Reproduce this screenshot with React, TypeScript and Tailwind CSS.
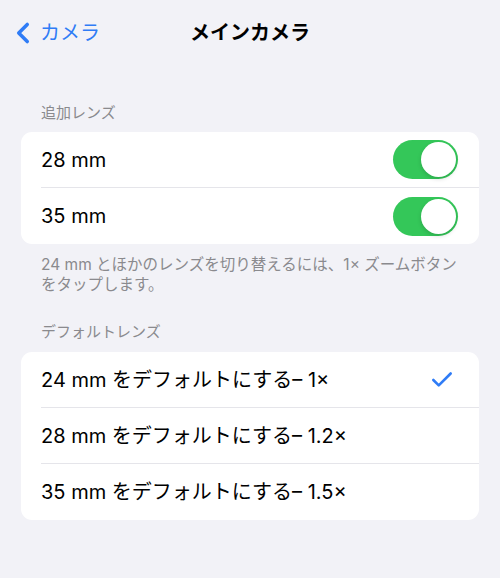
import { Check, ChevronLeft } from "lucide-react";

const font = { fontFamily: '"Inter", "Noto Sans CJK JP", sans-serif' };

function Toggle() {
  return (
    <div className="flex h-[39px] w-[65px] items-center justify-end rounded-full bg-[#34c759] p-[2px]">
      <div className="h-[35px] w-[35px] rounded-full bg-white shadow-[0_2px_4px_rgba(0,0,0,0.15)]" />
    </div>
  );
}

function Row({ label, right, last }: { label: string; right?: React.ReactNode; last?: boolean }) {
  return (
    <div className="flex h-[56px] items-center pl-5">
      <div
        className={`flex h-full flex-1 items-center justify-between pr-[21px] ${
          last ? "" : "border-b border-[#e5e5ea]"
        }`}
      >
        <span className="text-[20px] text-black">{label}</span>
        {right}
      </div>
    </div>
  );
}

export default function App() {
  return (
    <div className="h-[578px] w-[500px] bg-[#f2f2f7]" style={font}>
      {/* Nav bar */}
      <div className="relative flex h-[66px] items-center justify-center">
        <div className="absolute left-[6px] top-0 flex h-full items-center text-[#2f7cf6]">
          <ChevronLeft size={34} strokeWidth={2.5} />
          <span className="text-[20px]">カメラ</span>
        </div>
        <span className="text-[20px] font-bold text-black">メインカメラ</span>
      </div>

      {/* 追加レンズ */}
      <div className="px-[21px] pt-[37px]">
        <div className="pb-[9px] pl-5 text-[15px] leading-[20px] text-[#8a8a8e]">追加レンズ</div>
        <div className="overflow-hidden rounded-[11px] bg-white">
          <Row label="28 mm" right={<Toggle />} />
          <Row label="35 mm" right={<Toggle />} last />
        </div>
        <p className="pl-5 pr-5 pt-[11px] text-[15.5px] leading-[20px] text-[#8a8a8e]">
          24 mm とほかのレンズを切り替えるには、1× ズームボタンをタップします。
        </p>
      </div>

      {/* デフォルトレンズ */}
      <div className="px-[21px] pt-[27px]">
        <div className="pb-[10px] pl-5 text-[15px] leading-[20px] text-[#8a8a8e]">デフォルトレンズ</div>
        <div className="overflow-hidden rounded-[11px] bg-white">
          <Row
            label="24 mm をデフォルトにする– 1×"
            right={<Check size={26} strokeWidth={2.4} className="mr-[3px] text-[#2f7cf6]" />}
          />
          <Row label="28 mm をデフォルトにする– 1.2×" />
          <Row label="35 mm をデフォルトにする– 1.5×" last />
        </div>
      </div>
    </div>
  );
}
